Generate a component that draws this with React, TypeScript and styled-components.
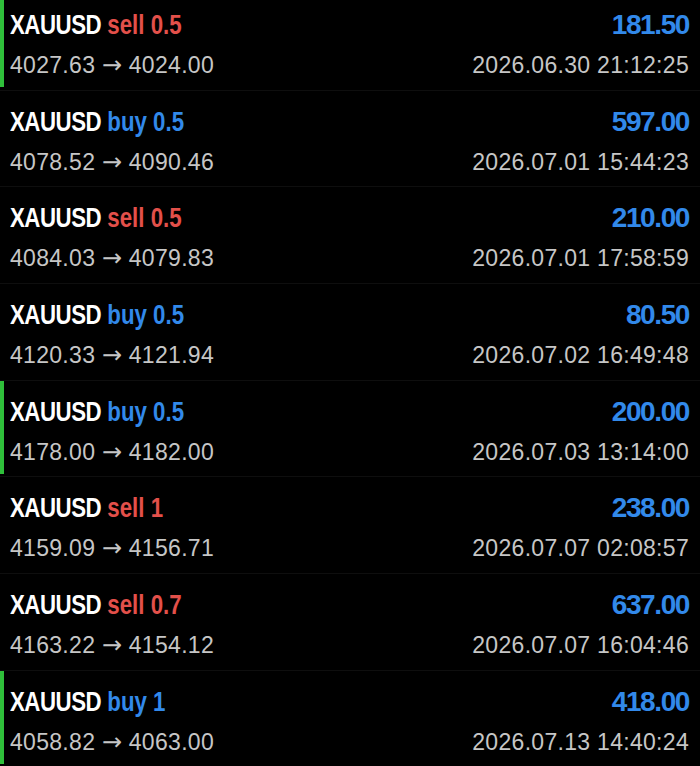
import React from 'react';
import styled, { createGlobalStyle } from 'styled-components';

const Global = createGlobalStyle`
	html, body {
		margin: 0;
		padding: 0;
		background: #000;
	}
	body {
		font-family: "Liberation Sans", Arial, sans-serif;
		overflow: hidden;
	}
`;

const List = styled.div`
	display: flex;
	flex-direction: column;
	margin-top: -6px;
	width: 700px;
`;

const Row = styled.div<{ $marked: boolean }>`
	position: relative;
	display: flex;
	justify-content: space-between;
	height: 96.67px;
	box-sizing: border-box;
	padding: 17px 11px 0 10px;
	border-bottom: 1px solid #0e0e0e;
	&::before {
		content: '';
		position: absolute;
		left: 0;
		top: 0;
		width: 4px;
		height: 93px;
		background: ${(p) => (p.$marked ? '#2fbf3a' : 'transparent')};
	}
`;

const Left = styled.div`
	display: flex;
	flex-direction: column;
	align-items: flex-start;
	gap: 15px;
`;

const Right = styled.div`
	display: flex;
	flex-direction: column;
	align-items: flex-end;
	gap: 15px;
`;

/* condensed bold headline, squeezed from the regular face */
const Title = styled.div`
	display: inline-block;
	font-family: "Liberation Sans", Arial, sans-serif;
	font-weight: bold;
	font-size: 28px;
	line-height: 28px;
	color: #fff;
	white-space: nowrap;
	transform: scaleX(0.795);
	transform-origin: left center;
`;

const Symbol = styled.span`
	letter-spacing: -0.6px;
`;

const Side = styled.span<{ $sell: boolean }>`
	color: ${(p) => (p.$sell ? '#e3504a' : '#3289ea')};
`;

const Amount = styled.div`
	font-family: "Liberation Sans", Arial, sans-serif;
	font-weight: bold;
	font-size: 28px;
	line-height: 28px;
	letter-spacing: -1.4px;
	color: #3289ea;
`;

const Sub = styled.div`
	font-family: "Liberation Sans", Arial, sans-serif;
	font-size: 23px;
	line-height: 22px;
	letter-spacing: 0.3px;
	color: #c6c6c6;
	white-space: nowrap;
`;

const Arrow = styled.span`
	font-family: "DejaVu Sans", sans-serif;
	font-size: 24px;
	letter-spacing: 0;
`;

interface Trade {
	side: 'buy' | 'sell';
	lot: string;
	open: string;
	close: string;
	profit: string;
	time: string;
	marked?: boolean;
}

const trades: Trade[] = [
	{ side: 'sell', lot: '0.5', open: '4027.63', close: '4024.00', profit: '181.50', time: '2026.06.30 21:12:25', marked: true },
	{ side: 'buy', lot: '0.5', open: '4078.52', close: '4090.46', profit: '597.00', time: '2026.07.01 15:44:23' },
	{ side: 'sell', lot: '0.5', open: '4084.03', close: '4079.83', profit: '210.00', time: '2026.07.01 17:58:59' },
	{ side: 'buy', lot: '0.5', open: '4120.33', close: '4121.94', profit: '80.50', time: '2026.07.02 16:49:48' },
	{ side: 'buy', lot: '0.5', open: '4178.00', close: '4182.00', profit: '200.00', time: '2026.07.03 13:14:00', marked: true },
	{ side: 'sell', lot: '1', open: '4159.09', close: '4156.71', profit: '238.00', time: '2026.07.07 02:08:57' },
	{ side: 'sell', lot: '0.7', open: '4163.22', close: '4154.12', profit: '637.00', time: '2026.07.07 16:04:46' },
	{ side: 'buy', lot: '1', open: '4058.82', close: '4063.00', profit: '418.00', time: '2026.07.13 14:40:24', marked: true },
];

const App: React.FC = () => {
	return (
		<>
			<Global />
			<List>
				{trades.map((t, i) => (
					<Row key={i} $marked={!!t.marked}>
						<Left>
							<Title>
								<Symbol>XAUUSD</Symbol>{' '}
								<Side $sell={t.side === 'sell'}>
									{t.side} {t.lot}
								</Side>
							</Title>
							<Sub>
								{t.open} <Arrow>→</Arrow> {t.close}
							</Sub>
						</Left>
						<Right>
							<Amount>{t.profit}</Amount>
							<Sub>{t.time}</Sub>
						</Right>
					</Row>
				))}
			</List>
		</>
	);
};

export default App;
